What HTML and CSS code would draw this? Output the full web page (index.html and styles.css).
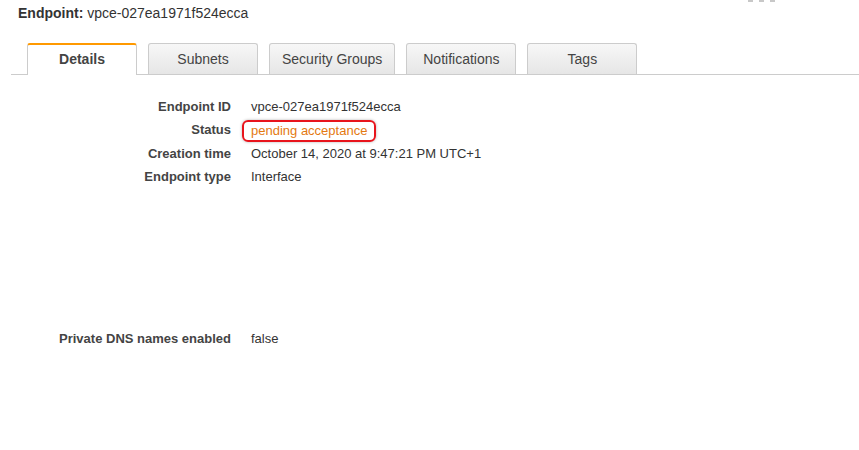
FILE: index.html
```html
<!DOCTYPE html>
<html lang="en">
<head>
    <title>Endpoint details</title>
    <link rel="stylesheet" href="styles.css">
</head>
<body>
    <div class="head">
        <div class="title"><b>Endpoint:</b> vpce-027ea1971f524ecca</div>
        <div class="more"><span></span><span></span><span></span></div>
    </div>

    <ul class="tabs">
        <li class="tab active">Details</li>
        <li class="tab">Subnets</li>
        <li class="tab">Security Groups</li>
        <li class="tab">Notifications</li>
        <li class="tab">Tags</li>
    </ul>

    <div class="props">
        <div class="lbl">Endpoint ID</div>
        <div class="val">vpce-027ea1971f524ecca</div>
        <div class="lbl">Status</div>
        <div class="val"><span class="status">pending acceptance</span></div>
        <div class="lbl">Creation time</div>
        <div class="val">October 14, 2020 at 9:47:21 PM UTC+1</div>
        <div class="lbl">Endpoint type</div>
        <div class="val">Interface</div>
    </div>

    <div class="props dns">
        <div class="lbl">Private DNS names enabled</div>
        <div class="val">false</div>
    </div>
</body>
</html>
```

FILE: styles.css
```css
body {
    margin: 0;
    background: #fff;
    font-family: "Liberation Sans", Arial, sans-serif;
    font-size: 13px;
    color: #333;
}
.head {
    display: flex;
    align-items: flex-start;
}
.title {
    padding: 5px 0 0 18px;
    font-size: 14px;
    line-height: 17px;
    color: #333;
}
.title b {
    color: #333;
}
.more {
    display: flex;
    gap: 6px;
    margin-left: auto;
    margin-right: 84px;
}
.more span {
    width: 5px;
    height: 2px;
    background: #c8c8c8;
}
.tabs {
    display: flex;
    align-items: flex-end;
    gap: 11px;
    list-style: none;
    margin: 21px 0 0 11px;
    padding: 0 0 0 16px;
    border-bottom: 1px solid #ccc;
    height: 31px;
}
.tab {
    box-sizing: border-box;
    min-width: 110px;
    height: 31px;
    padding: 0 12px;
    border: 1px solid #ccc;
    border-bottom: none;
    border-radius: 3px 3px 0 0;
    background: linear-gradient(#f7f7f7, #e6e6e6);
    font-size: 14px;
    line-height: 30px;
    text-align: center;
    color: #444;
}
.tab.active {
    height: 32px;
    margin-bottom: -1px;
    border-top: 2px solid #f90;
    background: #fff;
    font-weight: bold;
    color: #444;
    line-height: 29px;
}
.props {
    display: grid;
    grid-template-columns: 220px 1fr;
    column-gap: 20px;
    padding-left: 11px;
    margin-top: 20px;
    line-height: 23px;
}
.lbl {
    text-align: right;
    font-weight: bold;
    color: #444;
}
.val {
    color: #333;
}
.status {
    display: inline-block;
    margin-left: -9px;
    padding: 0 7px;
    height: 18px;
    line-height: 18px;
    border: 2px solid #e8141c;
    border-radius: 6px;
    box-shadow: 0 0 3px rgba(0, 0, 0, 0.3);
    color: #e47911;
    vertical-align: middle;
}
.dns {
    margin-top: 139px;
}
```
